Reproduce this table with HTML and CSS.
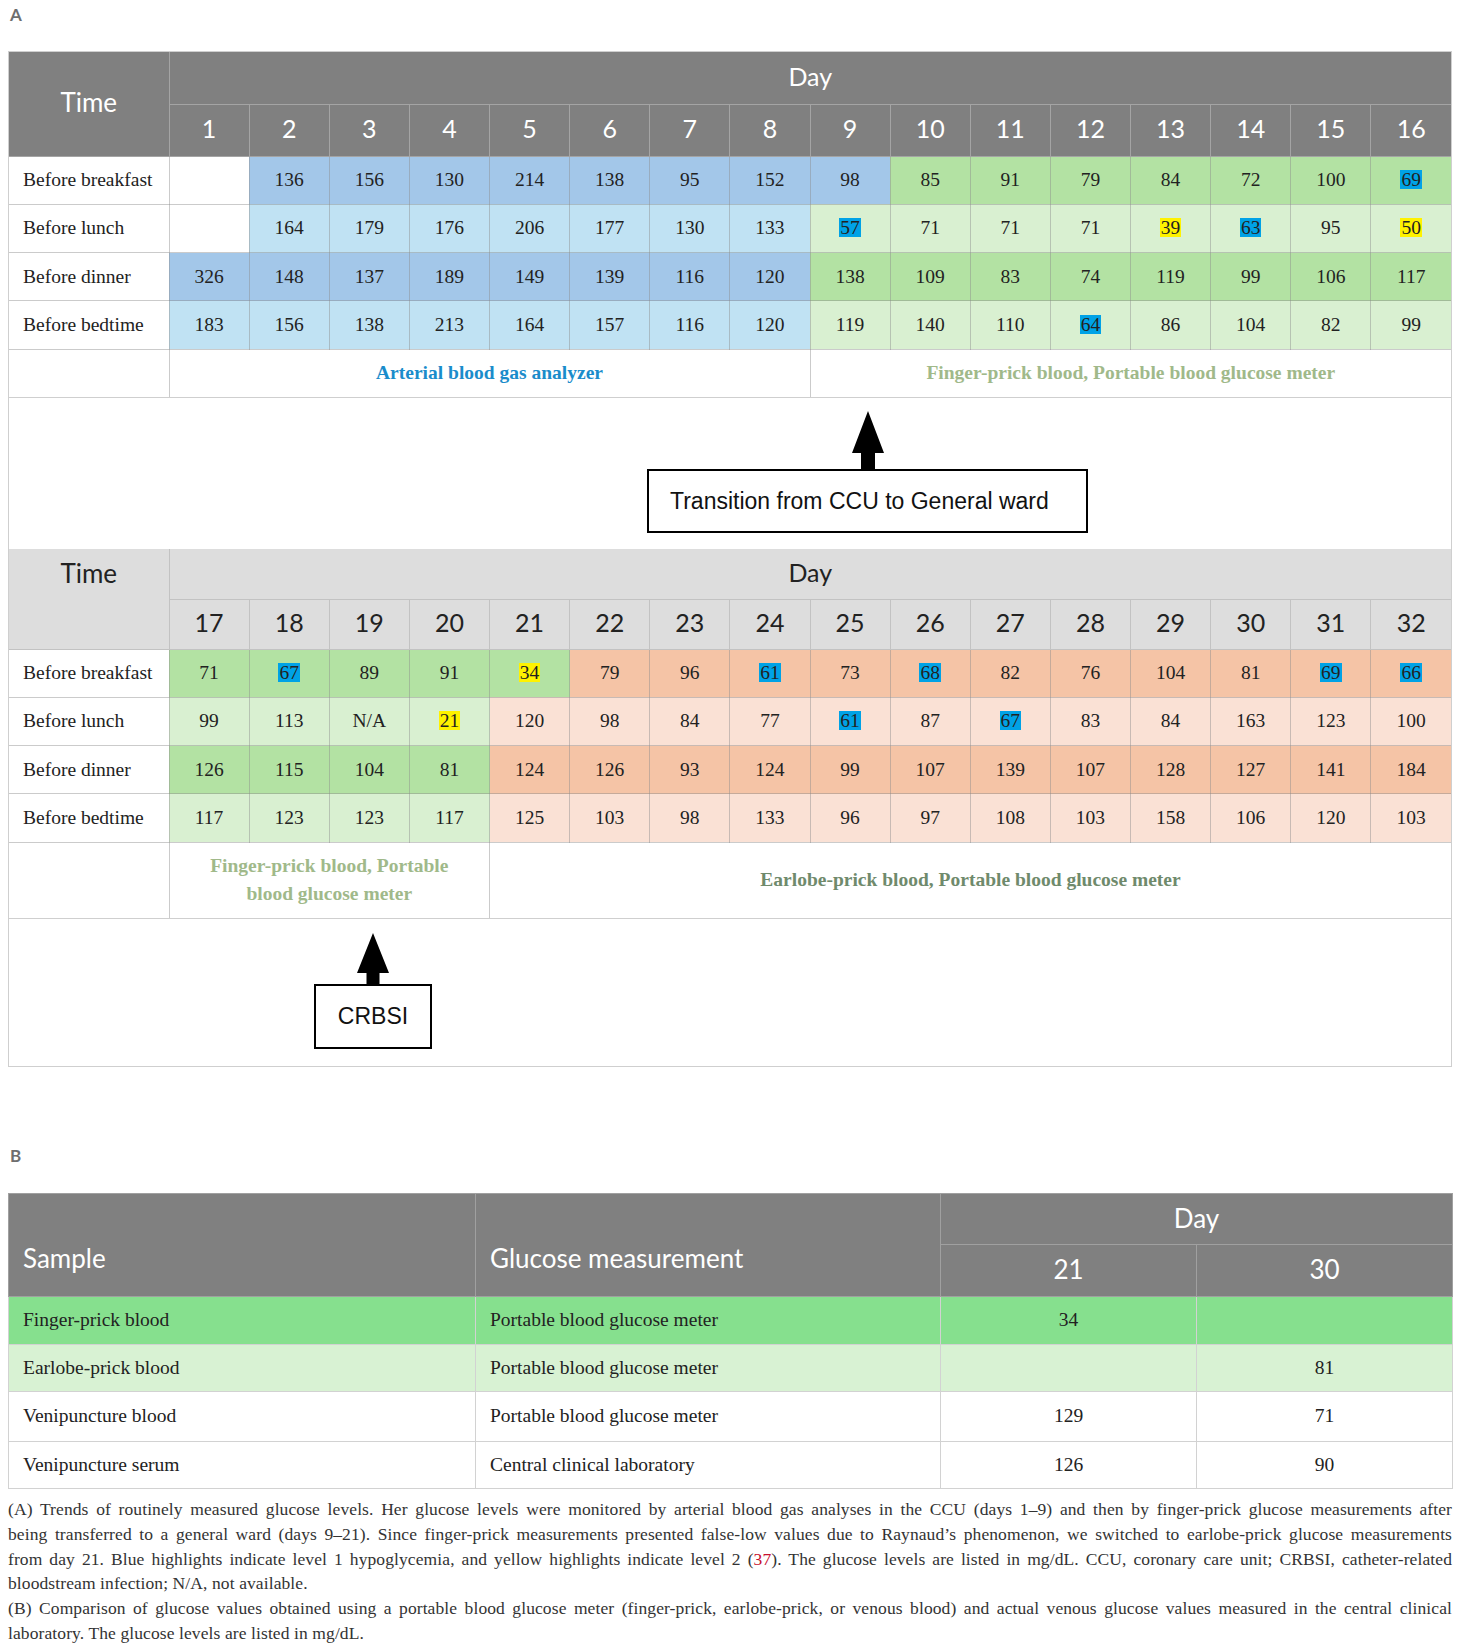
FILE: index.html
```html
<!DOCTYPE html>
<html lang="en">
<head>
<meta charset="utf-8">
<title>Glucose levels</title>
<link rel="stylesheet" href="styles.css">
</head>
<body>
<div class="page">
  <div class="panel-label">A</div>
  <div class="fig">
    <table class="grid dark-head">
      <colgroup><col class="c-time"><col span="16"></colgroup>
      <thead>
        <tr class="h1"><th rowspan="2" class="time">Time</th><th colspan="16">Day</th></tr>
        <tr class="h2"><th>1</th><th>2</th><th>3</th><th>4</th><th>5</th><th>6</th><th>7</th><th>8</th><th>9</th><th>10</th><th>11</th><th>12</th><th>13</th><th>14</th><th>15</th><th>16</th></tr>
      </thead>
      <tbody>
        <tr class="d"><td class="lbl">Before breakfast</td><td></td><td class="bd">136</td><td class="bd">156</td><td class="bd">130</td><td class="bd">214</td><td class="bd">138</td><td class="bd">95</td><td class="bd">152</td><td class="bd">98</td><td class="gd">85</td><td class="gd">91</td><td class="gd">79</td><td class="gd">84</td><td class="gd">72</td><td class="gd">100</td><td class="gd"><span class="hl hb">69</span></td></tr>
        <tr class="d"><td class="lbl">Before lunch</td><td></td><td class="bl">164</td><td class="bl">179</td><td class="bl">176</td><td class="bl">206</td><td class="bl">177</td><td class="bl">130</td><td class="bl">133</td><td class="gl"><span class="hl hb">57</span></td><td class="gl">71</td><td class="gl">71</td><td class="gl">71</td><td class="gl"><span class="hl hy">39</span></td><td class="gl"><span class="hl hb">63</span></td><td class="gl">95</td><td class="gl"><span class="hl hy">50</span></td></tr>
        <tr class="d"><td class="lbl">Before dinner</td><td class="bd">326</td><td class="bd">148</td><td class="bd">137</td><td class="bd">189</td><td class="bd">149</td><td class="bd">139</td><td class="bd">116</td><td class="bd">120</td><td class="gd">138</td><td class="gd">109</td><td class="gd">83</td><td class="gd">74</td><td class="gd">119</td><td class="gd">99</td><td class="gd">106</td><td class="gd">117</td></tr>
        <tr class="d"><td class="lbl">Before bedtime</td><td class="bl">183</td><td class="bl">156</td><td class="bl">138</td><td class="bl">213</td><td class="bl">164</td><td class="bl">157</td><td class="bl">116</td><td class="bl">120</td><td class="gl">119</td><td class="gl">140</td><td class="gl">110</td><td class="gl"><span class="hl hb">64</span></td><td class="gl">86</td><td class="gl">104</td><td class="gl">82</td><td class="gl">99</td></tr>
        <tr class="m1"><td></td><td colspan="8" class="method m-blue">Arterial blood gas analyzer</td><td colspan="8" class="method m-green">Finger-prick blood, Portable blood glucose meter</td></tr>
      </tbody>
    </table>
    <div class="annot annot-1">
      <div class="callout">
        <svg class="arrow" width="32" height="58" viewBox="0 0 32 58"><polygon points="16,0 32,42 23,42 23,58 9,58 9,42 0,42" fill="#000"/></svg>
        <div class="box box-wide">Transition from CCU to General ward</div>
      </div>
    </div>
    <table class="grid light-head">
      <colgroup><col class="c-time"><col span="16"></colgroup>
      <thead>
        <tr class="h1b"><th rowspan="2" class="time time-top">Time</th><th colspan="16">Day</th></tr>
        <tr class="h2b"><th>17</th><th>18</th><th>19</th><th>20</th><th>21</th><th>22</th><th>23</th><th>24</th><th>25</th><th>26</th><th>27</th><th>28</th><th>29</th><th>30</th><th>31</th><th>32</th></tr>
      </thead>
      <tbody>
        <tr class="d"><td class="lbl">Before breakfast</td><td class="gd">71</td><td class="gd"><span class="hl hb">67</span></td><td class="gd">89</td><td class="gd">91</td><td class="gd"><span class="hl hy">34</span></td><td class="sd">79</td><td class="sd">96</td><td class="sd"><span class="hl hb">61</span></td><td class="sd">73</td><td class="sd"><span class="hl hb">68</span></td><td class="sd">82</td><td class="sd">76</td><td class="sd">104</td><td class="sd">81</td><td class="sd"><span class="hl hb">69</span></td><td class="sd"><span class="hl hb">66</span></td></tr>
        <tr class="d"><td class="lbl">Before lunch</td><td class="gl">99</td><td class="gl">113</td><td class="gl">N/A</td><td class="gl"><span class="hl hy">21</span></td><td class="sl">120</td><td class="sl">98</td><td class="sl">84</td><td class="sl">77</td><td class="sl"><span class="hl hb">61</span></td><td class="sl">87</td><td class="sl"><span class="hl hb">67</span></td><td class="sl">83</td><td class="sl">84</td><td class="sl">163</td><td class="sl">123</td><td class="sl">100</td></tr>
        <tr class="d"><td class="lbl">Before dinner</td><td class="gd">126</td><td class="gd">115</td><td class="gd">104</td><td class="gd">81</td><td class="sd">124</td><td class="sd">126</td><td class="sd">93</td><td class="sd">124</td><td class="sd">99</td><td class="sd">107</td><td class="sd">139</td><td class="sd">107</td><td class="sd">128</td><td class="sd">127</td><td class="sd">141</td><td class="sd">184</td></tr>
        <tr class="d"><td class="lbl">Before bedtime</td><td class="gl">117</td><td class="gl">123</td><td class="gl">123</td><td class="gl">117</td><td class="sl">125</td><td class="sl">103</td><td class="sl">98</td><td class="sl">133</td><td class="sl">96</td><td class="sl">97</td><td class="sl">108</td><td class="sl">103</td><td class="sl">158</td><td class="sl">106</td><td class="sl">120</td><td class="sl">103</td></tr>
        <tr class="m2"><td></td><td colspan="4" class="method m-green wrap">Finger-prick blood, Portable blood glucose meter</td><td colspan="12" class="method m-gray">Earlobe-prick blood, Portable blood glucose meter</td></tr>
      </tbody>
    </table>
    <div class="annot annot-2">
      <div class="callout">
        <svg class="arrow" width="32" height="51" viewBox="0 0 32 51"><polygon points="16,0 32,40 22.5,40 22.5,51 9.5,51 9.5,40 0,40" fill="#000"/></svg>
        <div class="box box-small">CRBSI</div>
      </div>
    </div>
  </div>

  <div class="panel-label label-b">B</div>
  <table class="tb">
    <colgroup><col class="c-sample"><col class="c-meas"><col class="c-day"><col class="c-day"></colgroup>
    <thead>
      <tr class="tbh1"><th rowspan="2" class="left hcell">Sample</th><th rowspan="2" class="left hcell">Glucose measurement</th><th colspan="2">Day</th></tr>
      <tr class="tbh2"><th>21</th><th>30</th></tr>
    </thead>
    <tbody>
      <tr class="r-green"><td class="left">Finger-prick blood</td><td class="left">Portable blood glucose meter</td><td>34</td><td></td></tr>
      <tr class="r-pale"><td class="left">Earlobe-prick blood</td><td class="left">Portable blood glucose meter</td><td></td><td>81</td></tr>
      <tr class="r-white tall"><td class="left">Venipuncture blood</td><td class="left">Portable blood glucose meter</td><td>129</td><td>71</td></tr>
      <tr class="r-white"><td class="left">Venipuncture serum</td><td class="left">Central clinical laboratory</td><td>126</td><td>90</td></tr>
    </tbody>
  </table>

  <div class="caption">
    <p><span class="ln">(A) Trends of routinely measured glucose levels. Her glucose levels were monitored by arterial blood gas analyses in the CCU (days 1–9) and then by finger-prick glucose measurements after</span>
    <span class="ln">being transferred to a general ward (days 9–21). Since finger-prick measurements presented false-low values due to Raynaud’s phenomenon, we switched to earlobe-prick glucose measurements</span>
    <span class="ln">from day 21. Blue highlights indicate level 1 hypoglycemia, and yellow highlights indicate level 2 (<span class="ref">37</span>). The glucose levels are listed in mg/dL. CCU, coronary care unit; CRBSI, catheter-related</span>
    <span class="ln last">bloodstream infection; N/A, not available.</span></p>
    <p><span class="ln">(B) Comparison of glucose values obtained using a portable blood glucose meter (finger-prick, earlobe-prick, or venous blood) and actual venous glucose values measured in the central clinical</span>
    <span class="ln last">laboratory. The glucose levels are listed in mg/dL.</span></p>
  </div>
</div>
</body>
</html>
```

FILE: styles.css
```css
html, body {
  margin: 0;
  padding: 0;
  background: #ffffff;
}

.page {
  padding: 0 8px;
  width: 1444px;
  font-family: "Liberation Serif", "Times New Roman", serif;
  color: #222;
}

.panel-label {
  font-family: Lato, "Liberation Sans", sans-serif;
  font-weight: 700;
  font-size: 17px;
  line-height: 20px;
  color: #6e6e6e;
  padding-top: 5px;
  padding-left: 2px;
  height: 26px;
  margin-bottom: 20px;
}

.label-b {
  margin-top: 79px;
  padding-top: 0;
  height: 20px;
  margin-bottom: 27px;
}

.fig {
  border: 1px solid #cfcfcf;
  width: 1442px;
}

.grid {
  width: 100%;
  border-collapse: collapse;
  border-style: hidden;
  table-layout: fixed;
}

.c-time { width: 160px; }

.grid th {
  font-family: Lato, "Open Sans", sans-serif;
  font-weight: 400;
  font-size: 25px;
  padding: 0 0 4px 0;
  text-align: center;
}

.dark-head th {
  background: #808080;
  color: #ffffff;
  border: 1px solid #a4a4a4;
}

.light-head th {
  background: #dddddd;
  color: #222222;
  border: 1px solid #c2c2c2;
}

.grid th.time { font-size: 26px; }

.grid th.time-top {
  vertical-align: top;
  padding-top: 8px;
}

.h1 { height: 52px; }
.h2 { height: 52px; }
.h1b { height: 50px; }
.h2b { height: 50px; }

.grid td {
  border: 1px solid rgba(140, 140, 140, 0.45);
  padding: 0;
  text-align: center;
  font-size: 19.5px;
  color: #222;
}

.d { height: 48.25px; }
.m1 { height: 48px; }
.m2 { height: 76px; }

.grid td.lbl {
  text-align: left;
  padding-left: 14px;
  white-space: nowrap;
}

.bd { background: #a3c7e9; }
.bl { background: #c0e2f3; }
.gd { background: #b3e2a3; }
.gl { background: #d9f0d1; }
.sd { background: #f5c4a6; }
.sl { background: #fae1d5; }

.hl {
  display: inline-block;
  line-height: 19px;
  padding: 0 1px;
}
.hb { background: #00a2e6; }
.hy { background: #fff200; }

.grid td.method {
  font-weight: 700;
  font-size: 19.5px;
}
.grid td.m-blue { color: #1a8ccb; }
.grid td.m-green { color: #a0b98a; }
.grid td.m-gray { color: #6f8a6c; }
.grid td.wrap {
  padding: 0 34px;
  line-height: 28px;
}

.annot {
  display: flex;
  align-items: flex-start;
  border-top: 1px solid #cfcfcf;
}
.annot-1 {
  height: 151px;
  padding-left: 638px;
}
.annot-2 {
  height: 147px;
  padding-left: 305px;
}

.callout {
  display: flex;
  flex-direction: column;
  align-items: center;
}
.annot-1 .callout { padding-top: 13px; }
.annot-2 .callout { padding-top: 14px; }

.arrow { display: block; }

.box {
  border: 2px solid #000;
  font-family: "Liberation Sans", Arial, sans-serif;
  font-size: 23px;
  color: #111;
  display: flex;
  align-items: center;
  justify-content: center;
  box-sizing: border-box;
}
.box-wide {
  width: 441px;
  height: 64px;
  justify-content: flex-start;
  padding-left: 21px;
}
.box-small {
  width: 118px;
  height: 65px;
}

.tb {
  width: 1444px;
  border-collapse: collapse;
  table-layout: fixed;
  border: 1px solid #d0d0d0;
}
.c-sample { width: 467px; }
.c-meas { width: 465px; }
.c-day { width: 256px; }

.tb th {
  background: #808080;
  color: #fff;
  font-family: Lato, "Open Sans", sans-serif;
  font-weight: 400;
  font-size: 26px;
  border: 1px solid #a0a0a0;
  padding: 0 0 3px 0;
  text-align: center;
}
.tb th.hcell {
  text-align: left;
  padding-left: 14px;
  padding-top: 28px;
}
.tbh1 { height: 51px; }
.tbh2 { height: 52px; }

.tb td {
  border: 1px solid #d2d2d2;
  font-size: 19.5px;
  text-align: center;
  padding: 0;
  height: 46.5px;
  color: #222;
}
.tb td.left {
  text-align: left;
  padding-left: 14px;
}
.tb tr.tall td { height: 48.5px; }
.r-green td { background: #86e08e; }
.r-pale td { background: #d8f2d3; }
.r-white td { background: #fff; }

.caption {
  margin-top: 8px;
  font-size: 17.5px;
  letter-spacing: 0.1px;
  line-height: 24.8px;
  color: #333;
}
.caption p { margin: 0; }
.ln {
  display: block;
  text-align: justify;
  text-align-last: justify;
}
.ln.last { text-align-last: left; }
.ref { color: #c8102e; }
```
